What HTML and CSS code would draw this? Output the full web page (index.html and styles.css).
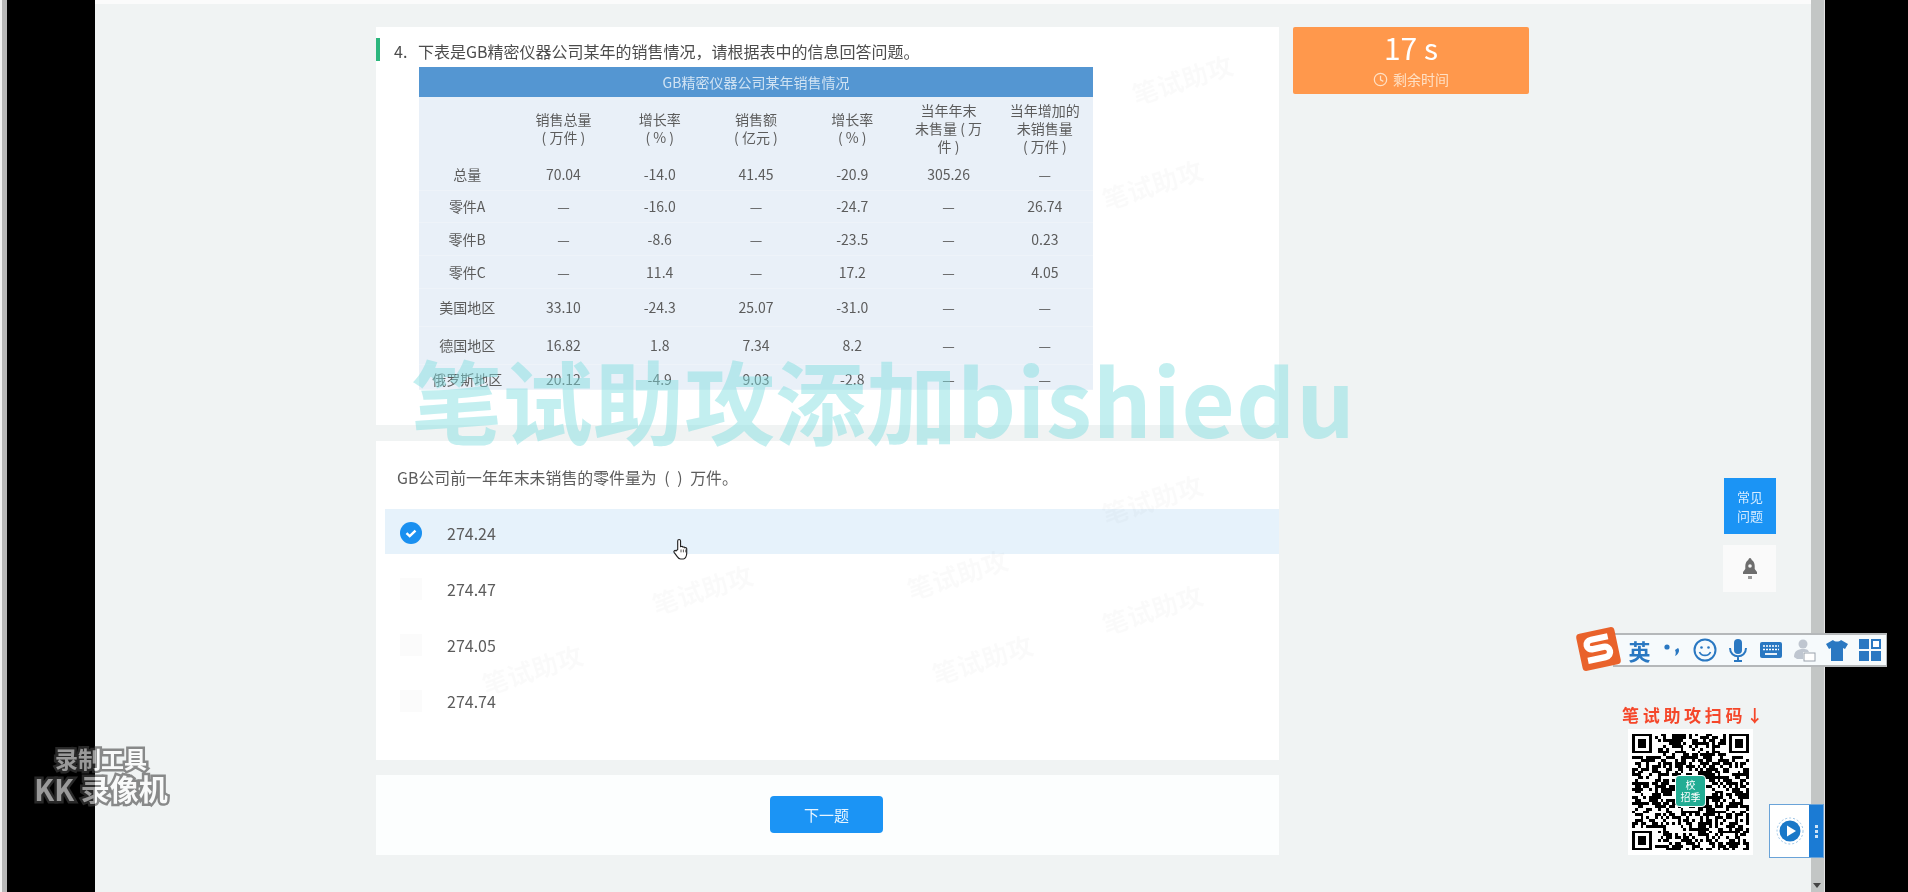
FILE: index.html
```html
<!DOCTYPE html>
<html lang="zh-CN">
<head>
<meta charset="utf-8">
<title>笔试</title>
<link rel="stylesheet" href="styles.css">
</head>
<body>
<div class="screen">
  <div class="edge"></div>
  <div class="letterbox left"></div>
  <div class="page">
    <main class="exam">
      <div class="questions">
        <section class="card card-stem">
          <h2 class="stem"><span class="stem-num">4.</span><span>下表是GB精密仪器公司某年的销售情况，请根据表中的信息回答问题。</span></h2>
          <table class="sales">
            <thead>
              <tr class="row-title"><th colspan="7">GB精密仪器公司某年销售情况</th></tr>
              <tr class="row-head">
                <th></th>
                <th>销售总量<br>( 万件 )</th>
                <th>增长率<br>( % )</th>
                <th>销售额<br>( 亿元 )</th>
                <th>增长率<br>( % )</th>
                <th>当年年末<br>未售量 ( 万<br>件 )</th>
                <th>当年增加的<br>未销售量<br>( 万件 )</th>
              </tr>
            </thead>
            <tbody>
              <tr class="row-a"><td>总量</td><td>70.04</td><td>-14.0</td><td>41.45</td><td>-20.9</td><td>305.26</td><td>—</td></tr>
              <tr class="row-a"><td>零件A</td><td>—</td><td>-16.0</td><td>—</td><td>-24.7</td><td>—</td><td>26.74</td></tr>
              <tr class="row-b"><td>零件B</td><td>—</td><td>-8.6</td><td>—</td><td>-23.5</td><td>—</td><td>0.23</td></tr>
              <tr class="row-b"><td>零件C</td><td>—</td><td>11.4</td><td>—</td><td>17.2</td><td>—</td><td>4.05</td></tr>
              <tr class="row-c"><td>美国地区</td><td>33.10</td><td>-24.3</td><td>25.07</td><td>-31.0</td><td>—</td><td>—</td></tr>
              <tr class="row-c"><td>德国地区</td><td>16.82</td><td>1.8</td><td>7.34</td><td>8.2</td><td>—</td><td>—</td></tr>
              <tr class="row-d"><td>俄罗斯地区</td><td>20.12</td><td>-4.9</td><td>9.03</td><td>-2.8</td><td>—</td><td>—</td></tr>
            </tbody>
          </table>
        </section>

        <section class="card card-options">
          <p class="prompt">GB公司前一年年末未销售的零件量为 ( ) 万件。</p>
          <ul class="options">
            <li class="option selected">
              <svg class="radio" viewBox="0 0 22 22"><circle cx="11" cy="11" r="11" fill="#1a90f0"/><path d="M6.5 11.2l3.2 3 5.8-5.6" fill="none" stroke="#fff" stroke-width="2.4"/></svg>
              <span>274.24</span>
            </li>
            <li class="option"><i class="radio blank"></i><span>274.47</span></li>
            <li class="option"><i class="radio blank"></i><span>274.05</span></li>
            <li class="option"><i class="radio blank"></i><span>274.74</span></li>
          </ul>
        </section>

        <section class="card card-next">
          <button class="next" type="button">下一题</button>
        </section>
      </div>

      <aside class="timer">
        <div class="timer-value">17 s</div>
        <div class="timer-label">
          <svg class="clock" viewBox="0 0 16 16"><circle cx="8" cy="8" r="6.6" fill="none" stroke="currentColor" stroke-width="1.3"/><path d="M8 4v4.4l3 1.6" fill="none" stroke="currentColor" stroke-width="1.3"/></svg>
          <span>剩余时间</span>
        </div>
      </aside>
    </main>
  </div>
  <div class="scrollbar"><i class="scroll-arrow"></i></div>
  <div class="letterbox right"></div>

  <div class="ghost g1">笔试助攻</div>
  <div class="ghost g2">笔试助攻</div>
  <div class="ghost g3">笔试助攻</div>
  <div class="ghost g4">笔试助攻</div>
  <div class="ghost g5">笔试助攻</div>
  <div class="ghost g6">笔试助攻</div>
  <div class="ghost g7">笔试助攻</div>
  <div class="ghost g8">笔试助攻</div>

  <div class="banner">笔试助攻添加<span class="banner-latin">bishiedu</span></div>

  <svg class="cursor" viewBox="0 0 20 24"><path d="M6 12V3a1.5 1.5 0 0 1 3 0v6l1-.2c1-.2 1.4.2 1.6.7 1-.4 1.7 0 1.9.6 1-.3 2 .2 2 1.2V16c0 3-1.600 6-3.500 6H9c-1.500 0-2.500-1-3.500-2.500L2.200 15c-.8-1.500 1-2.600 2-1.500z" fill="#fff" stroke="#222" stroke-width="1.200"/><path d="M9.500 12v3M12 12v3M14.500 12v3" stroke="#222" stroke-width=".8"/></svg>

  <div class="help">常见<br>问题</div>
  <div class="bell-box">
    <svg class="bell" viewBox="0 0 20 24"><path d="M10 1c1 0 1.500 1 1.700 2 2 1 3 3.500 3 6v3l2.300 3v2H3v-2l2.300-3V9c0-2.500 1-5 3-6C8.500 2 9 1 10 1z" fill="#6d6d6d"/><circle cx="10" cy="9" r="1.800" fill="#f4f4f4"/><rect x="8" y="19" width="4" height="3" fill="#9a9a9a"/></svg>
  </div>

  <div class="ime">
    <div class="ime-logo">
      <svg viewBox="0 0 36 36"><path d="M29 8H13c-7 0-7 9 0 9h10c7 0 7 10 0 10H6" fill="none" stroke="#fff" stroke-width="6"/></svg>
    </div>
    <span class="ime-item ime-lang">英</span>
    <span class="ime-item"><svg viewBox="0 0 24 24"><circle cx="7" cy="9" r="2.600" fill="#2a78c2"/><path d="M18 10c2 2 1 6-3 8 1-2 1-4 0-6z" fill="#2a78c2"/></svg></span>
    <span class="ime-item"><svg viewBox="0 0 24 24"><circle cx="12" cy="12" r="10.500" fill="none" stroke="#2a78c2" stroke-width="2"/><circle cx="8.500" cy="9.500" r="1.300" fill="#2a78c2"/><circle cx="15.500" cy="9.500" r="1.300" fill="#2a78c2"/><path d="M6.500 14c2 4.500 9 4.500 11 0" fill="none" stroke="#2a78c2" stroke-width="1.700"/></svg></span>
    <span class="ime-item"><svg viewBox="0 0 24 24"><rect x="8" y="1" width="8" height="15" rx="4" fill="#2a78c2"/><path d="M4 10c0 11 16 11 16 0M12 18v4M8 23h8" fill="none" stroke="#2a78c2" stroke-width="2"/></svg></span>
    <span class="ime-item"><svg viewBox="0 0 24 24"><rect x="1" y="4" width="22" height="16" rx="2" fill="#2a78c2"/><path d="M4 8h16M4 11.500h16" stroke="#fff" stroke-width="1.600" stroke-dasharray="2 1"/><path d="M6 16h12" stroke="#fff" stroke-width="1.800"/></svg></span>
    <span class="ime-item"><svg viewBox="0 0 24 24"><circle cx="11" cy="6" r="4.500" fill="#bfc6d0"/><path d="M2 19c0-6 4-8 9-8s5 1 6 3H11v7H5z" fill="#bfc6d0"/><rect x="12" y="15" width="11" height="8" fill="#fff" stroke="#9aa2ac"/></svg></span>
    <span class="ime-item"><svg viewBox="0 0 24 24"><path d="M8 2c2 2 6 2 8 0l7 4-3 5-2-1v13H6V10l-2 1-3-5z" fill="#2a78c2"/></svg></span>
    <span class="ime-item"><svg viewBox="0 0 24 24"><rect x="1" y="1" width="10" height="10" fill="#2a78c2"/><rect x="14" y="2" width="8" height="8" fill="#fff" stroke="#2a78c2" stroke-width="2"/><rect x="1" y="13" width="10" height="10" fill="#2a78c2"/><rect x="13" y="13" width="10" height="10" fill="#2a78c2"/></svg></span>
  </div>

  <div class="qr-title">笔试助攻扫码↓</div>
  <div class="qr">
    <svg class="qr-code" viewBox="0 0 41 41" shape-rendering="crispEdges"><path id="qr-path" fill="#000"/></svg>
    <div class="qr-badge">校<br>招季</div>
  </div>

  <div class="recorder">
    <div class="recorder-main">
      <svg viewBox="0 0 28 28"><circle cx="14" cy="14" r="13" fill="none" stroke="#9cc4e6" stroke-width="1" stroke-dasharray="2 2"/><circle cx="14" cy="14" r="10.500" fill="#1a78c8"/><path d="M11 8.500l9 5.500-9 5.500z" fill="#fff"/></svg>
    </div>
    <div class="recorder-strip"><i></i><i></i><i></i></div>
  </div>

  <div class="kk">
    <div class="kk-top">录制工具</div>
    <div class="kk-bottom">KK 录像机</div>
  </div>
</div>
<script src="qr.js"></script>
</body>
</html>
```

FILE: styles.css
```css
* { box-sizing: border-box; }
html, body { margin: 0; padding: 0; }
body {
  width: 1908px;
  height: 892px;
  overflow: hidden;
  background: #000;
  font-family: "Noto Sans CJK SC", "Noto Sans", sans-serif;
  color: #666;
}
.screen {
  position: relative;
  display: flex;
  width: 1908px;
  height: 892px;
  overflow: hidden;
  filter: blur(0.7px);
}
.edge { width: 7px; background: linear-gradient(90deg, #f2f2f2 0 2px, #b8b8b8 2px); }
.letterbox { background: #000; }
.letterbox.left { width: 88px; }
.letterbox.right { flex: 1; }
.page {
  width: 1716px;
  background: #f0f3f3;
  border-top: 4px solid #fbfbfb;
}
.scrollbar {
  position: relative;
  width: 14px;
  background: #c3c6c5;
  border-right: 1px solid #e4e4e4;
}
.scroll-arrow {
  position: absolute;
  left: 2px;
  bottom: 4px;
  border: 4px solid transparent;
  border-top: 5px solid #444;
  border-bottom: 0;
}

.exam {
  display: flex;
  align-items: flex-start;
  gap: 14px;
  padding: 23px 0 0 281px;
}
.questions {
  display: flex;
  flex-direction: column;
  width: 903px;
}
.card { background: #fff; }
.card-stem { height: 398px; padding-top: 11px; }
.card-options { height: 319px; margin-top: 16px; padding-top: 27px; }
.card-next {
  height: 80px;
  margin-top: 15px;
  display: flex;
  justify-content: center;
  padding: 21px 2px 0 0;
  background: #fcfefe;
}

.stem {
  display: flex;
  margin: 0;
  height: 23px;
  line-height: 27px;
  border-left: 4px solid #2cb67d;
  padding-left: 14px;
  font-size: 16px;
  font-weight: 400;
  color: #4c4c4c;
}
.stem-num { width: 24px; }

.sales {
  table-layout: fixed;
  border-collapse: collapse;
  width: 674px;
  margin: 6px 0 0 43px;
  font-size: 14px;
  line-height: 18px;
  text-align: center;
  background: #e9f0f8;
  color: #5c5c5c;
}
.sales th { font-weight: 400; padding: 0; }
.sales td { padding: 0; border-bottom: 1px solid #eef3f9; }
.row-title { height: 30px; }
.row-title th { background: #5496d2; color: #cfe2f3; font-size: 14px; }
.row-head { height: 61px; }
.row-a { height: 32px; }
.row-b { height: 33px; }
.row-c { height: 38px; }
.row-d { height: 25px; }
.row-d td { padding-top: 5px; }

.prompt {
  margin: 0 0 0 21px;
  font-size: 15.9px;
  line-height: 20px;
  word-spacing: 4px;
  color: #5c5c5c;
}
.options {
  list-style: none;
  display: flex;
  flex-direction: column;
  gap: 11px;
  margin: 21px 0 0 9px;
  padding: 0;
}
.option {
  display: flex;
  align-items: center;
  gap: 25px;
  height: 45px;
  padding: 2px 0 0 15px;
  font-size: 16px;
  color: #5c5c5c;
}
.option.selected { background: #e6f2fb; }
.radio { width: 22px; height: 22px; }
.radio.blank { display: block; background: #fbfbfb; }

.next {
  width: 113px;
  height: 37px;
  border: 0;
  border-radius: 4px;
  background: #1b94f5;
  color: #e8f5ff;
  font: 400 15px "Noto Sans CJK SC", sans-serif;
}

.timer {
  width: 236px;
  height: 67px;
  border-radius: 2px;
  background: #ff984c;
  color: #fff;
  text-align: center;
}
.timer-value { font-size: 30px; line-height: 36px; margin-top: 2px; font-weight: 400; }
.timer-label {
  display: flex;
  justify-content: center;
  align-items: center;
  gap: 5px;
  font-size: 14px;
  line-height: 20px;
  margin-top: 4px;
  color: #ffe0c4;
}
.clock { width: 15px; height: 15px; }

.ghost {
  position: absolute;
  font-size: 26px;
  font-weight: 700;
  color: rgba(0, 0, 0, 0.018);
  transform: rotate(-18deg);
  white-space: nowrap;
}
.g1 { left: 650px; top: 570px; }
.g2 { left: 905px; top: 555px; }
.g3 { left: 1100px; top: 590px; }
.g4 { left: 930px; top: 640px; }
.g5 { left: 480px; top: 650px; }
.g6 { left: 1100px; top: 480px; }
.g7 { left: 1100px; top: 165px; }
.g8 { left: 1130px; top: 60px; }

.banner {
  position: absolute;
  left: 411px;
  top: 342px;
  font-size: 91px;
  line-height: 112px;
  font-weight: 700;
  color: rgba(127, 221, 224, 0.47);
  white-space: nowrap;
}
.banner-latin { font-size: 92px; letter-spacing: 1px; }

.cursor { position: absolute; left: 672px; top: 538px; width: 19px; height: 23px; }

.help {
  position: absolute;
  left: 1724px;
  top: 478px;
  width: 52px;
  height: 56px;
  padding-top: 9px;
  background: #1b94f5;
  color: #d6ecff;
  font-size: 13px;
  line-height: 19px;
  text-align: center;
}
.bell-box {
  position: absolute;
  left: 1723px;
  top: 545px;
  width: 53px;
  height: 47px;
  display: flex;
  align-items: center;
  justify-content: center;
  background: #fafafa;
}
.bell { width: 20px; height: 26px; }

.ime {
  position: absolute;
  left: 1613px;
  top: 633px;
  width: 274px;
  height: 34px;
  display: flex;
  align-items: center;
  padding-left: 9px;
  background: #f6fafc;
  border: 1px solid #b5b8ba;
  border-width: 2px 1px;
}
.ime-logo {
  position: absolute;
  left: -35px;
  top: -5px;
  width: 39px;
  height: 38px;
  border-radius: 4px;
  background: #e9622b;
  transform: rotate(-12deg);
}
.ime-logo svg { display: block; width: 100%; height: 100%; }
.ime-item {
  width: 33px;
  display: flex;
  justify-content: center;
  align-items: center;
}
.ime-item svg { width: 24px; height: 24px; }
.ime-lang { font-size: 22px; font-weight: 700; line-height: 30px; color: #2a78c2; }

.qr-title {
  position: absolute;
  left: 1622px;
  top: 703px;
  font-size: 17px;
  line-height: 24px;
  font-weight: 700;
  letter-spacing: 3.7px;
  color: #f5472a;
  white-space: nowrap;
}
.qr {
  position: absolute;
  left: 1628px;
  top: 729px;
  width: 125px;
  height: 126px;
  padding: 4px;
  background: #fff;
}
.qr-code { display: block; width: 117px; height: 118px; }
.qr-badge {
  position: absolute;
  left: 47px;
  top: 46px;
  width: 31px;
  height: 32px;
  padding-top: 3px;
  border: 1px solid #fff;
  border-radius: 4px;
  background: #22ad94;
  color: #fff;
  font-size: 10px;
  line-height: 12px;
  text-align: center;
}

.recorder {
  position: absolute;
  left: 1769px;
  top: 804px;
  width: 55px;
  height: 54px;
  display: flex;
  border: 1px solid #6aa3d8;
  background: #fff;
}
.recorder-main { flex: 1; display: flex; align-items: center; justify-content: center; }
.recorder-main svg { width: 28px; height: 28px; }
.recorder-strip {
  width: 14px;
  display: flex;
  flex-direction: column;
  align-items: center;
  justify-content: center;
  gap: 2px;
  background: #1b7bd4;
}
.recorder-strip i { width: 3px; height: 3px; background: #cfe4f7; }

.kk {
  position: absolute;
  left: 25px;
  top: 744px;
  width: 152px;
  text-align: center;
  color: #fff;
  font-weight: 700;
  opacity: 0.6;
  -webkit-text-stroke: 5px #444;
  paint-order: stroke fill;
  white-space: nowrap;
}
.kk-top { font-size: 23px; line-height: 28px; }
.kk-bottom { font-size: 29px; line-height: 33px; }
```

FILE: qr.js
```js
(function () {
  var size = 41, seed = 20817, d = "";
  function rnd() {
    seed = (seed * 1103 + 12345) & 32767;
    return seed / 32768;
  }
  function inFinder(x, y, ox, oy) {
    return x >= ox && x < ox + 8 && y >= oy && y < oy + 8;
  }
  function finder(ox, oy) {
    d += "M" + ox + " " + oy + "h7v7h-7zM" + (ox + 1) + " " + (oy + 1) + "v5h5v-5z";
    d += "M" + (ox + 2) + " " + (oy + 2) + "h3v3h-3z";
  }
  for (var y = 0; y < size; y++) {
    for (var x = 0; x < size; x++) {
      var on = rnd() > 0.47;
      if (inFinder(x, y, 0, 0) || inFinder(x, y, 33, 0) || inFinder(x, y, 0, 33)) continue;
      if (on) d += "M" + x + " " + y + "h1v1h-1z";
    }
  }
  finder(0, 0);
  finder(34, 0);
  finder(0, 34);
  var path = document.getElementById("qr-path");
  path.setAttribute("d", d);
  path.setAttribute("fill-rule", "evenodd");
})();
```
